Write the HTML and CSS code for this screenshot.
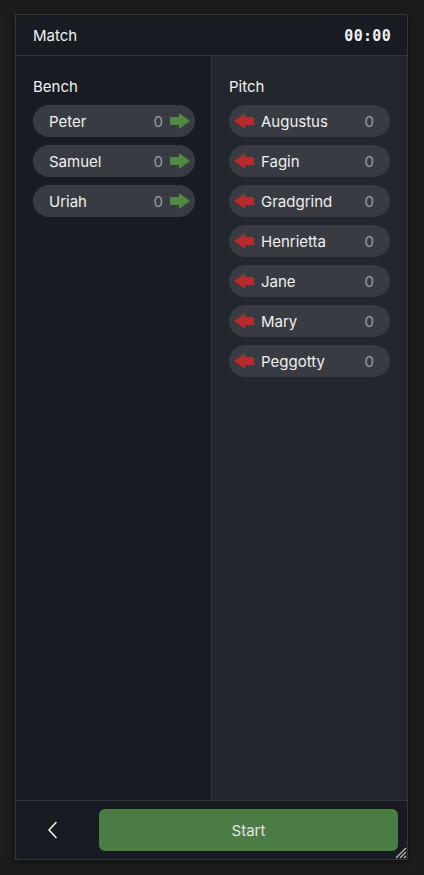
FILE: index.html
```html
<!DOCTYPE html>
<html>
<head>
<meta charset="utf-8">
<link rel="stylesheet" href="styles.css">
</head>
<body>
<div class="app">
  <header class="top">
    <span class="title">Match</span>
    <span class="clock">00:00</span>
  </header>
  <main class="cols">
    <section class="col bench">
      <h2 class="col-title">Bench</h2>
      <div class="list">
        <div class="pill"><span class="name">Peter</span><span class="count">0</span><svg class="arrow in" viewBox="0 0 20 16"><path d="M0 4H9V0L20 8L9 16V12H0Z"/></svg></div>
        <div class="pill"><span class="name">Samuel</span><span class="count">0</span><svg class="arrow in" viewBox="0 0 20 16"><path d="M0 4H9V0L20 8L9 16V12H0Z"/></svg></div>
        <div class="pill"><span class="name">Uriah</span><span class="count">0</span><svg class="arrow in" viewBox="0 0 20 16"><path d="M0 4H9V0L20 8L9 16V12H0Z"/></svg></div>
      </div>
    </section>
    <section class="col pitch">
      <h2 class="col-title">Pitch</h2>
      <div class="list">
        <div class="pill"><svg class="arrow out" viewBox="0 0 20 16"><path d="M20 4H11V0L0 8L11 16V12H20Z"/></svg><span class="name">Augustus</span><span class="count">0</span></div>
        <div class="pill"><svg class="arrow out" viewBox="0 0 20 16"><path d="M20 4H11V0L0 8L11 16V12H20Z"/></svg><span class="name">Fagin</span><span class="count">0</span></div>
        <div class="pill"><svg class="arrow out" viewBox="0 0 20 16"><path d="M20 4H11V0L0 8L11 16V12H20Z"/></svg><span class="name">Gradgrind</span><span class="count">0</span></div>
        <div class="pill"><svg class="arrow out" viewBox="0 0 20 16"><path d="M20 4H11V0L0 8L11 16V12H20Z"/></svg><span class="name">Henrietta</span><span class="count">0</span></div>
        <div class="pill"><svg class="arrow out" viewBox="0 0 20 16"><path d="M20 4H11V0L0 8L11 16V12H20Z"/></svg><span class="name">Jane</span><span class="count">0</span></div>
        <div class="pill"><svg class="arrow out" viewBox="0 0 20 16"><path d="M20 4H11V0L0 8L11 16V12H20Z"/></svg><span class="name">Mary</span><span class="count">0</span></div>
        <div class="pill"><svg class="arrow out" viewBox="0 0 20 16"><path d="M20 4H11V0L0 8L11 16V12H20Z"/></svg><span class="name">Peggotty</span><span class="count">0</span></div>
      </div>
    </section>
  </main>
  <footer class="bottom">
    <button class="back" aria-label="Back"><svg viewBox="0 0 12 18" width="12" height="18"><path d="M9 1.5L2 9L9 16.5" fill="none" stroke="#f2f2f2" stroke-width="1.6" stroke-linecap="round" stroke-linejoin="round"/></svg></button>
    <button class="start">Start</button>
    <svg class="grip" viewBox="0 0 14 14" width="14" height="14"><path d="M13 3L3 13M13 7L7 13M13 11L11 13" stroke="#bdbdbd" stroke-width="1.2"/></svg>
  </footer>
</div>
</body>
</html>
```
FILE: styles.css
```css
* { box-sizing: border-box; }
html, body { margin: 0; padding: 0; height: 100%; }
body {
  background: #1c1c1c;
  font-family: Inter, "Noto Sans", "Liberation Sans", sans-serif;
  color: #f0f0f0;
  padding: 14px 16px 15px 15px;
}
.app {
  position: relative;
  height: 846px;
  width: 393px;
  border: 1px solid #33373d;
  display: flex;
  flex-direction: column;
  background: #181b22;
  box-shadow: 0 2px 6px rgba(0,0,0,0.5);
}
.top {
  height: 41px;
  flex: none;
  display: flex;
  align-items: center;
  justify-content: space-between;
  padding: 1px 16px 0 17px;
  border-bottom: 1px solid #33373d;
  background: #181b22;
}
.title { font-size: 15px; color: #f2f2f2; }
.clock {
  font-family: "DejaVu Sans Mono", "Liberation Mono", monospace;
  font-weight: bold;
  font-size: 15px;
  color: #f2f2f2;
  letter-spacing: 0.3px;
}
.cols {
  flex: 1;
  display: grid;
  grid-template-columns: 196px 1fr;
}
.col {
  padding: 21px 17px 0 17px;
}
.bench { background: #181b22; border-right: 1px solid #33373d; }
.pitch { background: #22272e; }
.col-title {
  margin: 0 0 9px 0;
  font-size: 15px;
  font-weight: normal;
  line-height: 19px;
  color: #f2f2f2;
}
.list { display: flex; flex-direction: column; gap: 8px; }
.pill {
  height: 32px;
  border-radius: 16px;
  background: #383b41;
  display: flex;
  align-items: center;
  font-size: 15px;
}
.bench .pill { padding: 0 5px 0 16px; width: 162px; }
.pitch .pill { padding: 0 16px 0 5px; width: 161px; }
.name { flex: 1; color: #f0f0f0; }
.count { color: #9a9ea5; }
.arrow { width: 20px; height: 16px; flex: none; }
.arrow.in { fill: #4e8c45; margin-left: 7px; }
.arrow.out { fill: #b32d2c; margin-right: 7px; }
.bottom {
  position: relative;
  height: 59px;
  flex: none;
  border-top: 1px solid #33373d;
  display: flex;
  align-items: center;
  gap: 9px;
  padding: 0 9px 0 0;
  background: #181b22;
}
.back {
  width: 74px;
  height: 41px;
  background: none;
  border: none;
  display: flex;
  align-items: center;
  justify-content: center;
  padding: 0;
}
.start {
  flex: 1;
  height: 42px;
  border: none;
  border-radius: 6px;
  background: #4a7c44;
  color: #e4e4e4;
  font-family: Inter, "Noto Sans", "Liberation Sans", sans-serif;
  font-size: 15px;
}
.grip { position: absolute; right: 0; bottom: 0; }
```
